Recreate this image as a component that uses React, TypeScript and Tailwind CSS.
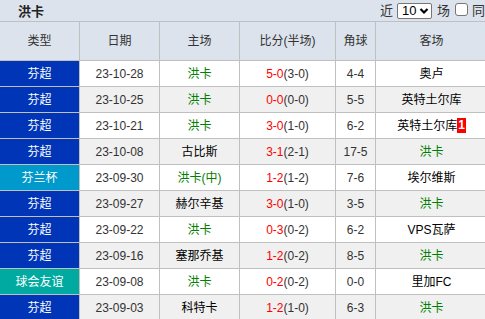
const rows = [
  { type: "芬超", tc: "bg-[#0035b8]", date: "23-10-28", home: "洪卡", hg: true, sc: "5-0", ht: "(3-0)", cn: "4-4", away: "奥卢", ag: false },
  { type: "芬超", tc: "bg-[#0035b8]", date: "23-10-25", home: "洪卡", hg: true, sc: "0-0", ht: "(0-0)", cn: "5-5", away: "英特土尔库", ag: false },
  { type: "芬超", tc: "bg-[#0035b8]", date: "23-10-21", home: "洪卡", hg: true, sc: "3-0", ht: "(1-0)", cn: "6-2", away: "英特土尔库", ag: false, red: "1" },
  { type: "芬超", tc: "bg-[#0035b8]", date: "23-10-08", home: "古比斯", hg: false, sc: "3-1", ht: "(2-1)", cn: "17-5", away: "洪卡", ag: true },
  { type: "芬兰杯", tc: "bg-[#0099cc]", date: "23-09-30", home: "洪卡(中)", hg: true, sc: "1-2", ht: "(1-2)", cn: "7-6", away: "埃尔维斯", ag: false },
  { type: "芬超", tc: "bg-[#0035b8]", date: "23-09-27", home: "赫尔辛基", hg: false, sc: "3-0", ht: "(1-0)", cn: "3-5", away: "洪卡", ag: true },
  { type: "芬超", tc: "bg-[#0035b8]", date: "23-09-22", home: "洪卡", hg: true, sc: "0-3", ht: "(0-2)", cn: "6-2", away: "VPS瓦萨", ag: false },
  { type: "芬超", tc: "bg-[#0035b8]", date: "23-09-16", home: "塞那乔基", hg: false, sc: "1-2", ht: "(0-2)", cn: "8-5", away: "洪卡", ag: true },
  { type: "球会友谊", tc: "bg-[#00aaa0]", date: "23-09-08", home: "洪卡", hg: true, sc: "0-2", ht: "(0-2)", cn: "0-0", away: "里加FC", ag: false },
  { type: "芬超", tc: "bg-[#0035b8]", date: "23-09-03", home: "科特卡", hg: false, sc: "1-2", ht: "(1-0)", cn: "6-3", away: "洪卡", ag: true },
];

const cols = "grid grid-cols-[80px_80px_80px_96px_40px_112px] w-[488px]";
const cell = "flex items-center justify-center border-r border-[#c0c0c0] whitespace-nowrap";

export default function App() {
  return (
    <div
      className="w-[485px] h-[319px] overflow-hidden bg-white text-[12px] text-[#333]"
      style={{ fontFamily: '"Liberation Sans", Arial, "Noto Sans CJK SC", sans-serif' }}
    >
      <div className="flex items-center h-[22px] bg-[#dce3ed] border-b border-[#c0c0c0] whitespace-nowrap overflow-hidden">
        <span className="w-[380px] shrink-0 pl-[18px] pt-[3px] text-[13px] font-bold text-[#222]">洪卡</span>
        <span className="shrink-0 text-[13px]">近</span>
        <div className="shrink-0 ml-[4px] flex items-center justify-between w-[35px] h-[16px] border border-[#767676] rounded-[2px] bg-white pl-[4px] pr-[2px] text-[13px] leading-none text-black">
          <span>10</span>
          <svg width="10" height="8" viewBox="0 0 10 8">
            <path d="M1.5 2 L5 5.5 L8.5 2" fill="none" stroke="#000" strokeWidth="2.2" />
          </svg>
        </div>
        <span className="shrink-0 ml-[5px] text-[13px]">场</span>
        <span className="shrink-0 ml-[5px] w-[13px] h-[13px] border border-[#767676] rounded-[3px] bg-white -mt-[2px]" />
        <span className="shrink-0 ml-[4px] text-[13px]">同主</span>
      </div>
      <div className={`${cols} h-[39px] bg-[#dce3ed] border-b border-[#c0c0c0]`}>
        {["类型", "日期", "主场", "比分(半场)", "角球", "客场"].map((h, i) => (
          <div key={i} className={cell}>
            {h}
          </div>
        ))}
      </div>
      {rows.map((r, i) => (
        <div key={i} className={`${cols} h-[26px] border-b border-[#c0c0c0] ${i % 2 === 1 ? "bg-[#f0f0f0]" : "bg-white"}`}>
          <div className={`${cell} ${r.tc} text-white`}>{r.type}</div>
          <div className={cell}>{r.date}</div>
          <div className={`${cell} ${r.hg ? "text-[#008000]" : "text-black"}`}>{r.home}</div>
          <div className={cell}>
            <span className="text-[#ff0000]">{r.sc}</span>
            {r.ht}
          </div>
          <div className={cell}>{r.cn}</div>
          <div className={`${cell} ${r.ag ? "text-[#008000]" : "text-black"}`}>
            {r.away}
            {r.red && <span className="bg-[#ff0000] text-white font-bold px-[1px] leading-[15px]">{r.red}</span>}
          </div>
        </div>
      ))}
    </div>
  );
}
